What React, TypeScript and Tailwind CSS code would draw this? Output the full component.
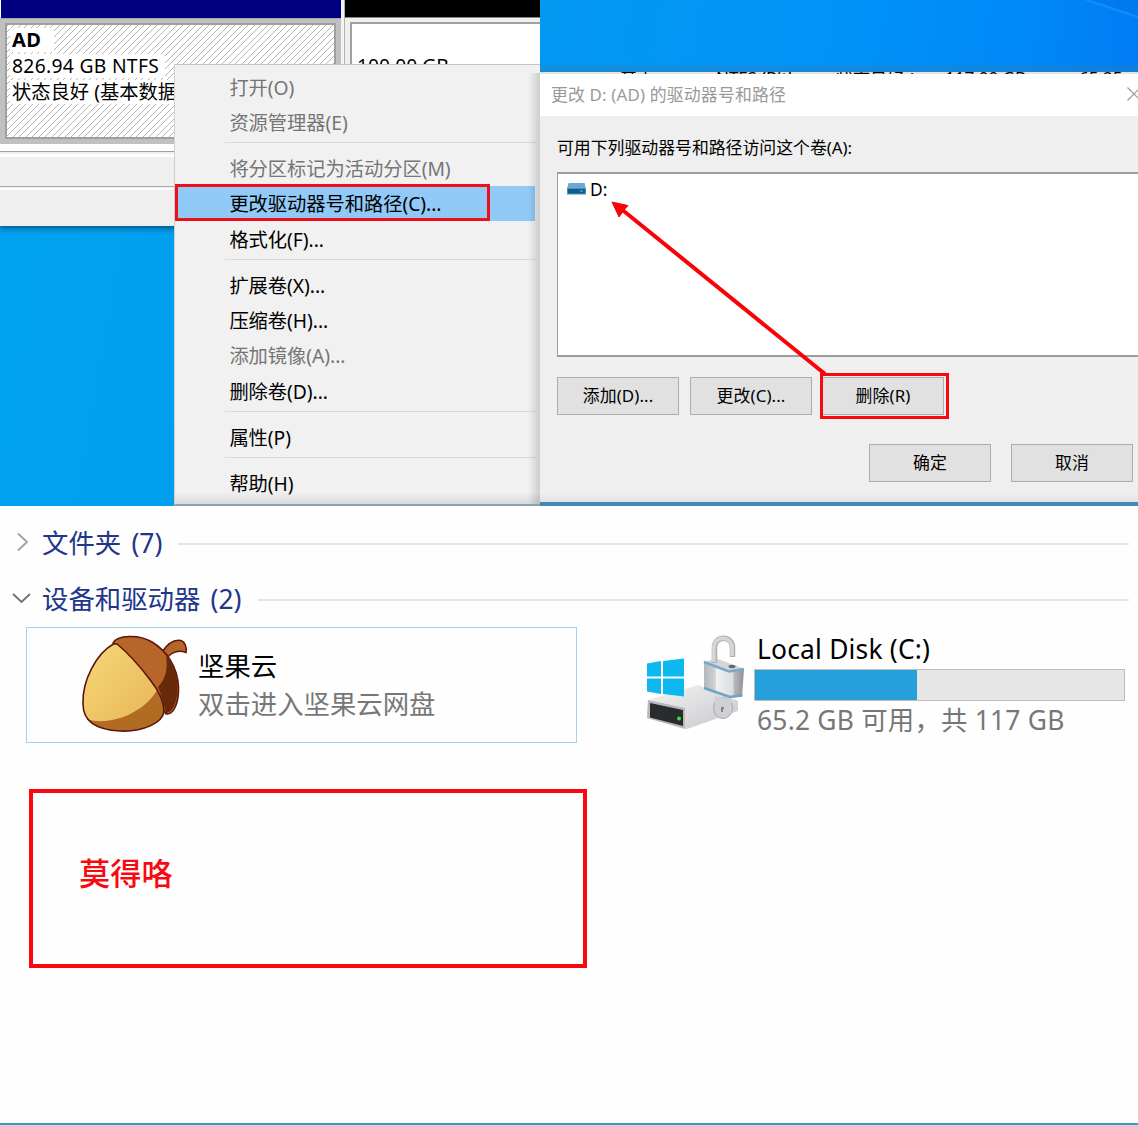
import React from "react";

const FONT = "font-['Noto_Sans','Noto_Sans_CJK_SC',sans-serif]";

function MenuItem({ label, tone = "text-black" }: { label: string; tone?: string }) {
  return (
    <div className={`flex h-[35.3px] shrink-0 items-center whitespace-pre pl-[54.4px] pt-px text-[19.3px] leading-none tracking-[-0.05px] ${tone}`}>
      {label}
    </div>
  );
}

function MenuSeparator() {
  return (
    <div className="flex h-[10.9px] shrink-0 items-start pl-[50px] pr-1 pt-[2.5px]">
      <div className="h-px w-full bg-[#d8dadc]" />
    </div>
  );
}

function DialogButton({ label }: { label: string }) {
  return (
    <button className="flex h-[38px] w-[122px] shrink-0 items-center justify-center border border-[#adadad] bg-[#e1e1e1] pt-px text-[16.9px] leading-none tracking-[0.1px] text-black">
      {label}
    </button>
  );
}

function DiskManager() {
  return (
    <div className="relative h-[506px] w-[540px] shrink-0 overflow-hidden bg-[linear-gradient(100deg,#00a4f0,#0098ea)]">
      <div className="flex h-[144px] bg-white">
        <div className="w-[341px] pl-px">
          <div className="h-[18px] bg-[#000080]" />
          <div className="-ml-px h-[126px] border-t border-[#a8a8a8] bg-[#c0c0c0] px-[5px] pb-[5px] pt-[4px]">
            <div className="h-[116px] border-2 border-[#a0a0a0] bg-white bg-[repeating-linear-gradient(135deg,#b4b4b4_0px,#b4b4b4_0.8px,transparent_0.8px,transparent_4.6px)] pl-[3px] pt-[2px] text-[19.3px] leading-[26px] text-black">
              <div className="h-[26px]"><span className="inline-block h-[24px] w-[44px] bg-white pl-[2px] text-[20px] font-bold leading-[24px] tracking-[0.3px]">AD</span></div>
              <div className="h-[26px]"><span className="inline-block h-[24px] w-[155px] whitespace-nowrap bg-white pl-[2px] leading-[24px] tracking-[0.3px]">826.94 GB NTFS</span></div>
              <div className="h-[26px]"><span className="inline-block h-[24px] w-[210px] whitespace-nowrap bg-white pl-[2px] leading-[24px]">状态良好 (基本数据分区)</span></div>
            </div>
          </div>
        </div>
        <div className="w-[4px] border-r border-[#b0b0b0] bg-[#f4f4f4]" />
        <div className="w-[195px] bg-[#efefef]">
          <div className="h-[18px] border-b border-[#888] bg-black" />
          <div className="ml-[5px] mt-[4px] h-[116px] border-2 border-r-0 border-[#a0a0a0] bg-white pl-[5px] pt-[29px] text-[19.3px] leading-[26px] text-black">
            100.00 GB
          </div>
        </div>
      </div>
      <div className="h-[82px] bg-[#efefef] shadow-[0_2px_6px_rgba(0,40,80,0.7)]">
        <div className="h-[8px] border-b border-[#a0a0a0] bg-white" />
        <div className="h-[35px] border-b border-[#a8a8a8] pt-[2px]"><div className="h-[3px] bg-white" /></div>
        <div className="pt-px"><div className="h-[2px] bg-white" /></div>
      </div>
      <div className="absolute left-[174px] top-[64px] h-[442px] w-[366px] border-b-2 border-l border-t border-b-[#8aa4ae] border-l-[#d0d0d0] border-t-[#c4c4c4] bg-[#f1f1f1] pt-[4px]">
        <MenuItem label="打开(O)" tone="text-[#757575]" />
        <MenuItem label="资源管理器(E)" tone="text-[#757575]" />
        <MenuSeparator />
        <MenuItem label="将分区标记为活动分区(M)" tone="text-[#757575]" />
        <div className="mr-[5px] bg-[#91c9f7]"><MenuItem label="更改驱动器号和路径(C)..." /></div>
        <MenuItem label="格式化(F)..." />
        <MenuSeparator />
        <MenuItem label="扩展卷(X)..." />
        <MenuItem label="压缩卷(H)..." />
        <MenuItem label="添加镜像(A)..." tone="text-[#757575]" />
        <MenuItem label="删除卷(D)..." />
        <MenuSeparator />
        <MenuItem label="属性(P)" />
        <MenuSeparator />
        <MenuItem label="帮助(H)" />
        <div className="absolute bottom-0 right-0 top-[8px] w-[12px] bg-gradient-to-r from-transparent to-black/15" />
        <div className="absolute inset-x-0 bottom-0 h-[12px] bg-gradient-to-b from-transparent to-black/10" />
      </div>
      <div className="absolute left-[175px] top-[184px] h-[37px] w-[315px] border-[3px] border-[#ee1018]" />
    </div>
  );
}

function DriveDialog() {
  return (
    <div className="relative flex h-[506px] w-[598px] shrink-0 flex-col overflow-hidden">
      <div className="relative h-[72px] shrink-0 bg-[linear-gradient(100deg,#0398f2_0%,#0294f8_45%,#0088f8_82%,#007cf2_100%)]">
        <svg className="absolute right-0 top-0" width="60" height="24" viewBox="0 0 60 24">
          <path d="M6 -2H60V15Z" fill="#0070e4" opacity="0.35" />
          <path d="M0 -3L60 17" fill="none" stroke="#1c98ff" strokeWidth="2" opacity="0.6" />
        </svg>
        <div className="absolute inset-x-0 bottom-0 h-[10px] bg-gradient-to-b from-transparent to-[#2a7fb8]/60" />
      </div>
      <div className="relative h-[2px] shrink-0 overflow-hidden bg-[#dfe3e6] text-[17px] leading-[20px] text-black">
        <span className="absolute left-[80px] top-[-3px]">基本</span>
        <span className="absolute left-[176px] top-[-4px]">NTFS (BitLo</span>
        <span className="absolute left-[296px] top-[-3px]">状态良好 (</span>
        <span className="absolute left-[405px] top-[-4px]">117.00 GB</span>
        <span className="absolute left-[539px] top-[-4px]">65.25 GB</span>
      </div>
      <div className="flex h-[42px] shrink-0 items-center justify-between bg-white pl-[11px] text-[16.9px] leading-none tracking-[0.15px] text-[#999]">
        <span className="whitespace-nowrap">更改 D: (AD) 的驱动器号和路径</span>
        <svg className="mb-[2px] mr-[-3px]" width="14" height="14" viewBox="0 0 14 14" stroke="#999" strokeWidth="1.2">
          <path d="M.5 .5L13.5 13.5M13.5 .5L.5 13.5" />
        </svg>
      </div>
      <div className="h-[386px] shrink-0 bg-[#efefef] pl-[17px]">
        <div className="flex h-[56px] items-center pt-[8px] text-[16.9px] leading-none tracking-[-0.03px] text-black">可用下列驱动器号和路径访问这个卷(A):</div>
        <div className="flex h-[185px] items-start border-y-2 border-l border-[#9a9c9e] bg-white pl-[9px] pt-[6px]">
          <svg className="mr-[4px] mt-[3px]" width="19" height="12" viewBox="0 0 19 12">
            <path d="M1.5 0H17.5L19 6H0Z" fill="#69a9d8" />
            <path d="M0 5H19V11.5H0Z" fill="#4c91bd" />
            <path d="M1 6H18V10.5H1Z" fill="#0f5e87" />
            <path d="M13 8H16" stroke="#4ed0bc" />
          </svg>
          <span className="text-[17.4px] leading-[18px] text-black">D:</span>
        </div>
        <div className="mt-[20px] flex gap-[11px]">
          <DialogButton label="添加(D)..." />
          <DialogButton label="更改(C)..." />
          <div className="-ml-px"><DialogButton label="删除(R)" /></div>
        </div>
        <div className="mr-[5px] mt-[29px] flex justify-end gap-[20px]">
          <DialogButton label="确定" />
          <DialogButton label="取消" />
        </div>
      </div>
      <div className="h-[4px] shrink-0 bg-[#4289b5]" />
      <div className="absolute bottom-[4px] left-0 h-[10px] w-full bg-gradient-to-b from-transparent to-black/5" />
      <div className="absolute left-[280px] top-[372.5px] h-[46px] w-[129px] border-[3px] border-[#f80810]" />
      <svg className="absolute left-[60px] top-[190px]" width="240" height="190" viewBox="0 0 240 190">
        <path d="M225 184L20 18" stroke="#f80408" strokeWidth="4" />
        <path d="M12 12L28 15.5L24 20L19 27Z" fill="#f80408" stroke="#f80408" />
      </svg>
    </div>
  );
}

function GroupHeader({ label, open }: { label: string; open: boolean }) {
  return (
    <div className="flex h-[56px] items-center pr-[9px]">
      <svg className="ml-[11px] mr-[9px] shrink-0" width="22" height="22" viewBox="0 0 22 22" fill="none" stroke={open ? "#707070" : "#a0a0a0"} strokeWidth="1.8">
        {open ? <path d="M2 6L10.5 14L19 6" /> : <path d="M7 1.5L16 10L7 18.5" />}
      </svg>
      <span className="mr-[16px] whitespace-pre text-[26.4px] leading-none text-[#21368b] [word-spacing:3.4px]">{label}</span>
      <div className="mt-px h-[2px] flex-1 bg-[#e6e6e6]" />
    </div>
  );
}

function Acorn() {
  return (
    <svg width="130" height="120" viewBox="0 0 130 120" className="shrink-0">
      <defs>
        <linearGradient id="nut" x1="0" y1="0" x2="1" y2="1">
          <stop offset="0" stopColor="#f9d878" />
          <stop offset="1" stopColor="#e4b254" />
        </linearGradient>
      </defs>
      <path d="M92 27C98 18 104 14 111 15.500C115 17 117 22 116 27.500C109 25 103 26 97 33Z" fill="#b56628" stroke="#5c160c" strokeWidth="1.5" />
      <path d="M43 18C47 10 69 9 82 17C97 26 107.500 42 108.500 62C109 77 104 90 96 89L90 80L60 35Z" fill="#b56628" stroke="#5c160c" strokeWidth="1.600" />
      <path d="M96 31C104 38 108 53 107.500 65C107 78 102 88 96 88C94 78 91 69 88 62C96 54 98 43 96 31Z" fill="#67290a" />
      <path d="M43.500 19C27 28 12 55 13 79C13 98 29 105 50 106C73 107 93 98 94 86C94 76 88 65 81 56C69 40 58 28 47 19Z" fill="url(#nut)" />
      <path d="M17 94C40 102 76 87 87.500 64C92 72 95 81 94 86C91 99 72 107 50 106C35 105 23 101 17 94Z" fill="#b16b23" />
      <path d="M43.500 19C27 28 12 55 13 79C13 98 29 105 50 106C73 107 93 98 94 86C94 76 88 65 81 56C69 40 58 28 47 19Z" fill="none" stroke="#5c160c" strokeWidth="1.600" />
    </svg>
  );
}

function LockedDrive() {
  return (
    <svg width="130" height="125" viewBox="0 0 130 125" className="shrink-0">
      <defs>
        <linearGradient id="drive" x1="0" y1="0" x2="1" y2="1"><stop stopColor="#f5f5f5" /><stop offset="1" stopColor="#c6c7ca" /></linearGradient>
        <linearGradient id="lock" x1="0" x2="1"><stop stopColor="#b4b7bb" /><stop offset=".28" stopColor="#d0d1d4" /><stop offset=".31" stopColor="#f1f1f1" /><stop offset=".72" stopColor="#dcdde0" /><stop offset=".76" stopColor="#b4b7bc" /><stop offset="1" stopColor="#8e9298" /></linearGradient>
      </defs>
      <path d="M18 80L68 65L108 81V91L57 109L17 98Z" fill="url(#drive)" />
      <path d="M18 80L55 88V109L17 98Z" fill="#b6b8bb" />
      <path d="M20 83L53 90V106L20 97.500Z" fill="#292b2c" />
      <circle cx="49" cy="98.500" r="2" fill="#30e53c" />
      <path d="M17 43.500L31 41V56.500H17ZM33 41L54 38.500V56.500H33ZM17 58.500H31V74L17 71.500ZM33 58.500H54V76.500L33 74Z" fill="#0db8ee" />
      <path d="M74 42L88 39L114 49L112 77L100 78L74 69Z" fill="url(#lock)" />
      <path d="M74 42L88 39L114 49L99 52Z" fill="#d3d5d8" />
      <path d="M74 42L99 51.500L114 49" fill="none" stroke="#79a9c8" strokeWidth="2.600" />
      <path d="M74 68L100 77L112.500 75" fill="none" stroke="#6da5c9" strokeWidth="2.600" />
      <ellipse cx="102" cy="46.500" rx="3.500" ry="1.700" fill="#6b6669" />
      <path d="M84.500 43V28C84 15 103 15 102.500 28V37" fill="none" stroke="#b1b4b7" strokeWidth="5.600" />
      <path d="M83.800 42V28C84 15 102 15 102 28V36" fill="none" stroke="#d5d6d8" strokeWidth="3.400" />
      <ellipse cx="93" cy="88" rx="9.500" ry="10.500" fill="#cfd1d4" stroke="#a6a9ad" />
      <path d="M85 76L101 79V88L85 86Z" fill="#cfd1d4" />
      <path d="M92 87V92M92 88H94" stroke="#84888e" strokeWidth="2" />
    </svg>
  );
}

export default function App() {
  return (
    <div className={`flex h-[1125px] w-[1138px] flex-col overflow-hidden bg-white ${FONT}`}>
      <div className="flex h-[506px] shrink-0">
        <DiskManager />
        <DriveDialog />
      </div>
      <div className="h-[617px] shrink-0 bg-[#fefefe] pt-[9px]">
        <GroupHeader label="文件夹 (7)" open={false} />
        <GroupHeader label="设备和驱动器 (2)" open />
        <div className="flex pl-[26px]">
          <div className="flex h-[116px] w-[551px] items-center border border-[#9fd3ee] pl-[43px]">
            <Acorn />
            <div className="ml-[-2px] text-[26.4px] leading-[38px]">
              <div className="text-black">坚果云</div>
              <div className="text-[#777]">双击进入坚果云网盘</div>
            </div>
          </div>
          <div className="ml-[53px] mt-[-7px] h-[125px] w-[124px]"><LockedDrive /></div>
          <div className="w-[371px] text-[26.4px]">
            <div className="h-[42px] whitespace-pre pl-[3px] leading-[44px] tracking-[0.2px] text-black">Local Disk (C:)</div>
            <div className="h-[32px] border border-[#bcbcbc] bg-[#e6e6e6]"><div className="h-full w-[162px] bg-[#26a0da]" /></div>
            <div className="whitespace-pre pl-[3px] leading-[39px] tracking-[0.22px] text-[#777]">65.2 GB 可用，共 117 GB</div>
          </div>
        </div>
        <div className="ml-[29px] mt-[43.500px] flex h-[179px] w-[558px] items-center border-4 border-[#f90810] pb-[9px] pl-[46px] text-[31.2px] font-medium leading-none text-[#fa0810]">
          莫得咯
        </div>
      </div>
      <div className="h-[2px] bg-[#2e9fc5]" />
    </div>
  );
}
